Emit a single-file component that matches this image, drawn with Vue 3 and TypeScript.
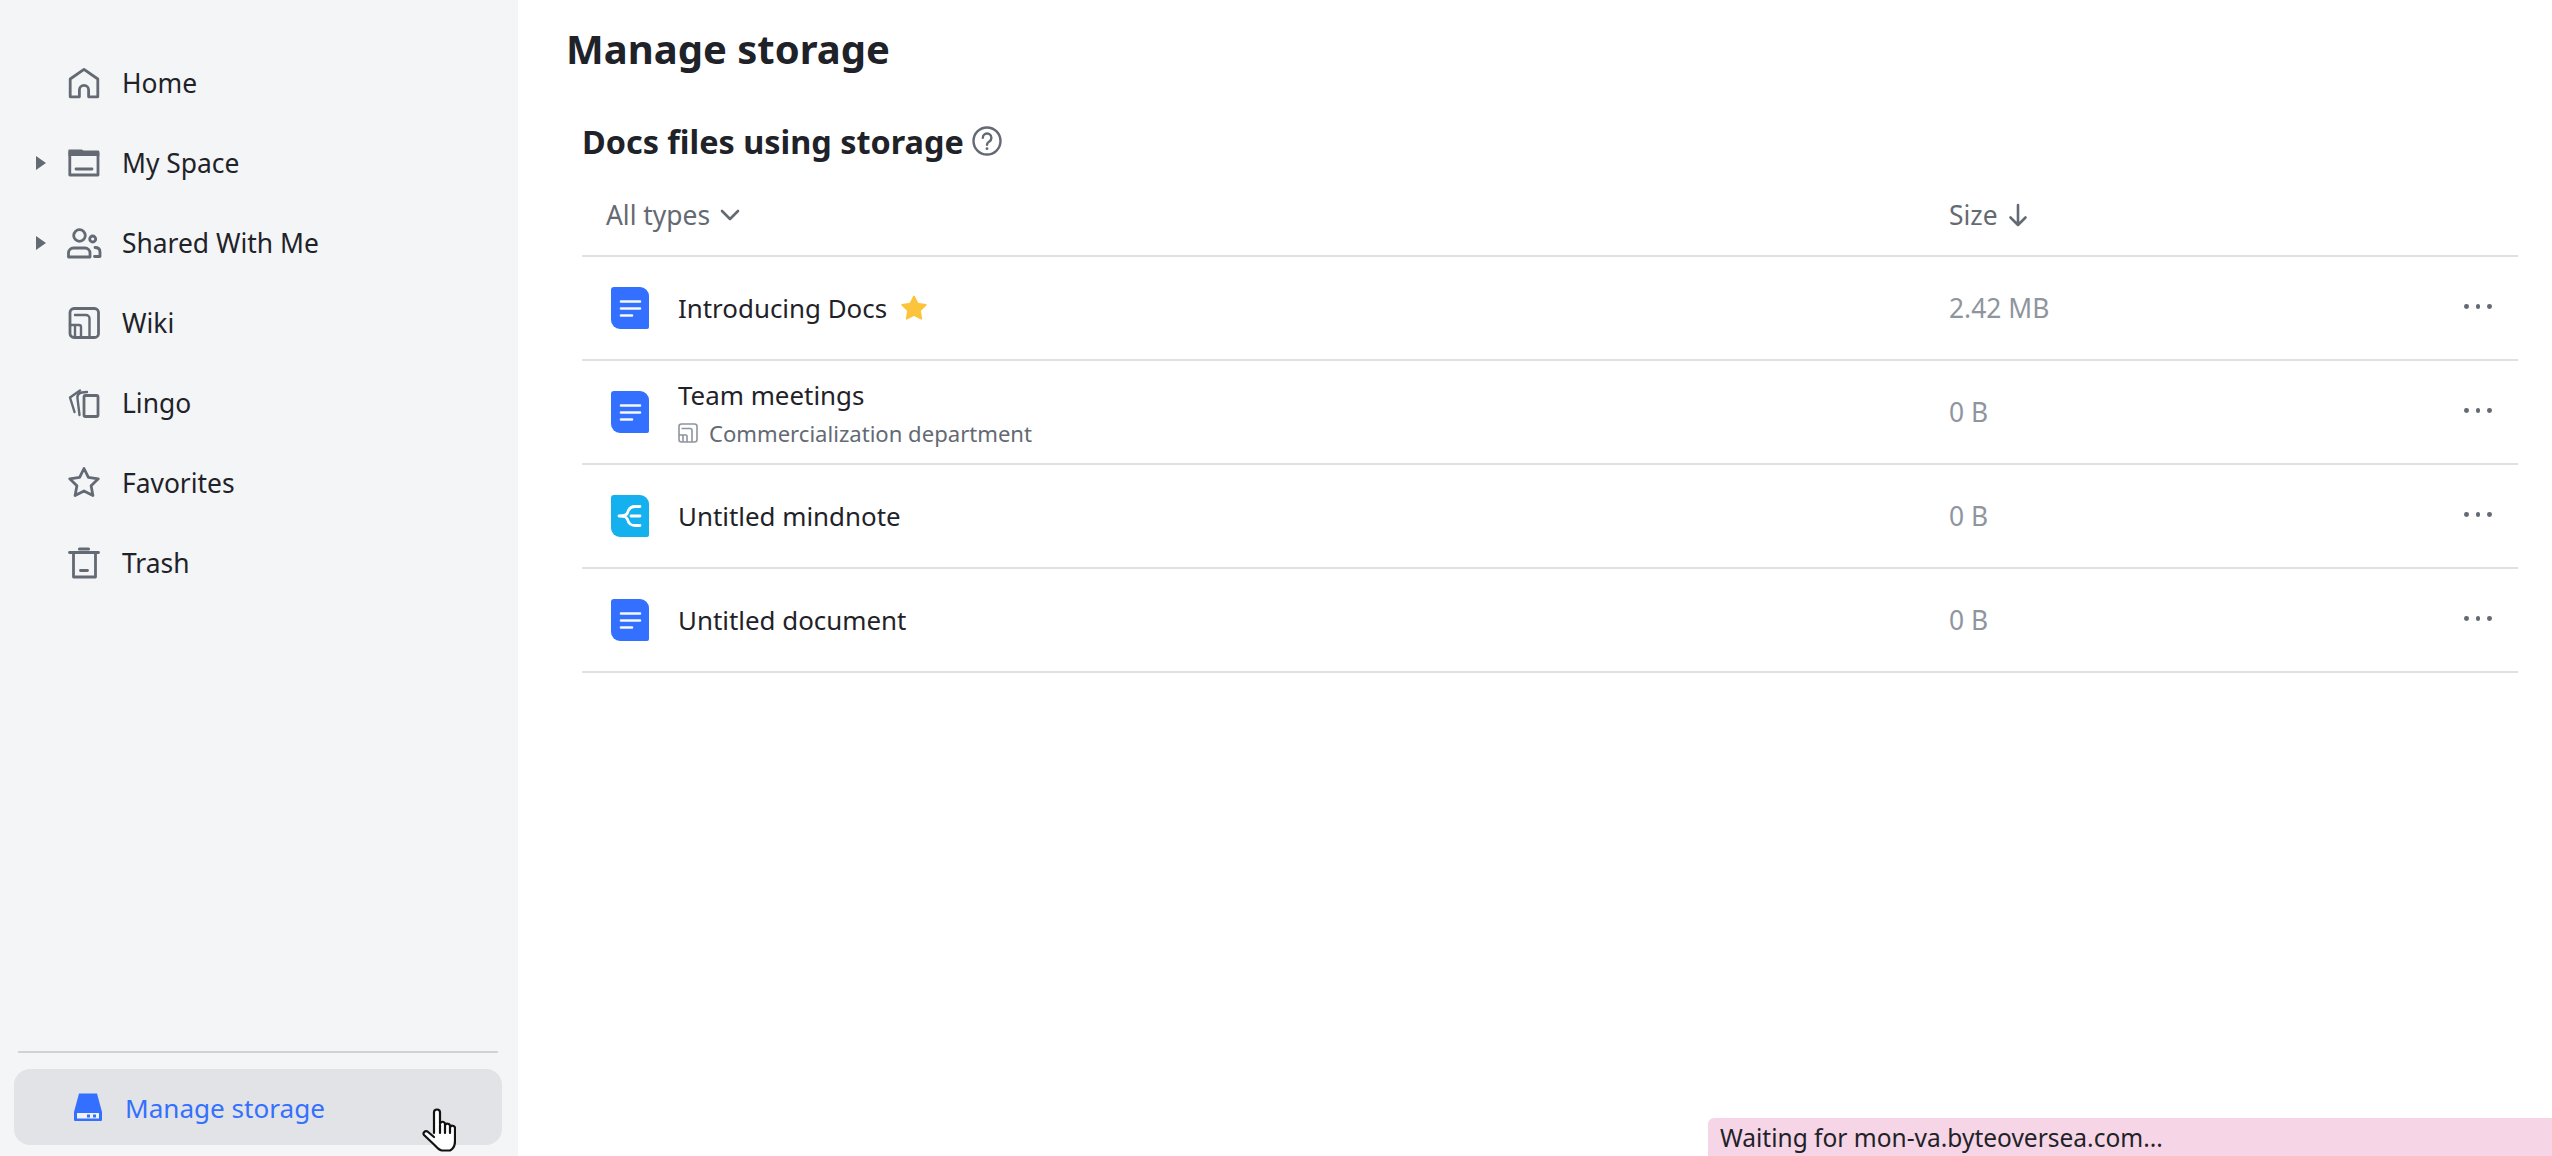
<script setup lang="ts">
const nav = [
  { key: 'home', label: 'Home', caret: false },
  { key: 'space', label: 'My Space', caret: true },
  { key: 'shared', label: 'Shared With Me', caret: true },
  { key: 'wiki', label: 'Wiki', caret: false },
  { key: 'lingo', label: 'Lingo', caret: false },
  { key: 'fav', label: 'Favorites', caret: false },
  { key: 'trash', label: 'Trash', caret: false },
]
const rows = [
  { name: 'Introducing Docs', kind: 'doc', size: '2.42 MB', star: true, sub: '' },
  { name: 'Team meetings', kind: 'doc', size: '0 B', star: false, sub: 'Commercialization department' },
  { name: 'Untitled mindnote', kind: 'mind', size: '0 B', star: false, sub: '' },
  { name: 'Untitled document', kind: 'doc', size: '0 B', star: false, sub: '' },
]
</script>

<template>
  <div class="page">
    <aside class="side">
      <nav class="nav">
        <div v-for="n in nav" :key="n.key" class="nav-row">
          <span class="caret-slot"><i v-if="n.caret" class="caret"></i></span>
          <svg class="nav-ico" viewBox="0 0 40 40" fill="none" stroke="#646a73" stroke-width="2.800" stroke-linejoin="round" stroke-linecap="round">
            <path v-if="n.key === 'home'" d="M6.200 16 20 6.400 33.800 16V33.800H24.600V27a4.600 4.600 0 0 0-9.200 0V33.800H6.200Z" />
            <template v-else-if="n.key === 'space'">
              <path d="M5.800 9H34V32H5.800Z" />
              <path d="M4.500 6.500H18L21 9.500H35.300V13H4.500Z" fill="#646a73" stroke="none" />
              <path d="M12 26H28" />
            </template>
            <template v-else-if="n.key === 'shared'">
              <circle cx="15.500" cy="12.500" r="5.800" />
              <path d="M4.500 34V30a5 5 0 0 1 5-5H21a5 5 0 0 1 5 5v4Z" />
              <circle cx="28.700" cy="16" r="3" />
              <path d="M31 24.500c3 0 5 1.500 5 4.500v4.500h-5.500" />
            </template>
            <template v-else-if="n.key === 'wiki'">
              <rect x="6" y="5.500" width="28.500" height="29" rx="4" />
              <path d="M11 12H22a3.500 3.500 0 0 1 3.500 3.500V34" stroke-width="2.400" />
              <path d="M6 22H15a2 2 0 0 1 2 2V34M11 22V34" stroke-width="2.400" />
            </template>
            <template v-else-if="n.key === 'lingo'">
              <rect x="20" y="12.500" width="14" height="21" rx="1.500" />
              <path d="M15.500 32 13.500 15.500C13 12 15 10 18 9.500l5-.5" stroke-width="2.400" />
              <path d="M10.500 29 6 14.500 16 7.500" stroke-width="2.400" />
            </template>
            <path v-else-if="n.key === 'fav'" d="M20 5.500 24.400 14.400 34.300 15.800 27.100 22.800 28.900 32.600 20 28 11.100 32.600 12.900 22.800 5.700 15.800 15.600 14.400Z" />
            <template v-else>
              <path d="M5.500 9.500H34.500" />
              <path d="M15.500 6H24.500" stroke-width="3.200" />
              <path d="M9.500 9.500V34H31.500V9.500" />
              <path d="M16.500 27.500H23.500" />
            </template>
          </svg>
          <span class="nav-label">{{ n.label }}</span>
        </div>
      </nav>
      <div class="side-foot">
        <div class="rule"></div>
        <div class="storage-btn">
          <svg class="storage-ico" viewBox="0 0 28 28">
            <path d="M5 .5H23L28 19V27a1 1 0 0 1-1 1H1a1 1 0 0 1-1-1V19Z" fill="#3370ff" />
            <rect x="3" y="20" width="22" height="5.500" fill="#f0f2f7" />
            <rect x="13" y="21.500" width="3" height="3" fill="#3370ff" />
            <rect x="19" y="21.500" width="3" height="3" fill="#3370ff" />
          </svg>
          <span class="storage-label">Manage storage</span>
        </div>
      </div>
    </aside>

    <main class="main">
      <h1 class="title">Manage storage</h1>
      <section class="panel">
        <h2 class="sub">
          Docs files using storage
          <svg class="help" viewBox="0 0 30 30" fill="none" stroke="#646a73" stroke-width="2.400" stroke-linecap="round">
            <circle cx="15" cy="15" r="13.500" />
            <path d="M10.800 11.800a4.300 4.300 0 1 1 6.500 3.700c-1.500.9-2.300 1.700-2.300 3.200" />
            <path d="M15 22.600v.1" stroke-width="2.800" />
          </svg>
        </h2>
        <div class="head row-grid">
          <div class="head-cell first">
            All types
            <svg class="chev" viewBox="0 0 20 12" fill="none" stroke="#646a73" stroke-width="2.600" stroke-linecap="round" stroke-linejoin="round"><path d="M2 2l8 8 8-8" /></svg>
          </div>
          <div class="head-cell">
            Size
            <svg class="arrow" viewBox="0 0 20 24" fill="none" stroke="#646a73" stroke-width="2.600" stroke-linecap="round" stroke-linejoin="round"><path d="M10 2v20M2.500 14.500 10 22l7.500-7.500" /></svg>
          </div>
          <div></div>
        </div>
        <div v-for="r in rows" :key="r.name" class="row row-grid">
          <div class="name-cell">
            <svg v-if="r.kind === 'doc'" class="file" viewBox="0 0 38 42">
              <path d="M3 0H29a9 9 0 0 1 9 9V40a2 2 0 0 1-2 2H9a9 9 0 0 1-9-9V3a3 3 0 0 1 3-3Z" fill="#3370ff" />
              <path d="M10 14.500H29M10 21.500H29M10 28.500H21" stroke="#fff" stroke-width="2.600" stroke-linecap="round" fill="none" opacity=".95" />
            </svg>
            <svg v-else class="file" viewBox="0 0 38 42">
              <path d="M3 0H29a9 9 0 0 1 9 9V40a2 2 0 0 1-2 2H9a9 9 0 0 1-9-9V3a3 3 0 0 1 3-3Z" fill="#14b1ee" />
              <path d="M29 11.500H24C20 11.500 17.500 14 16.500 18 15.500 20 14 21 8 21 14 21 15.500 22 16.500 24.500 17.500 28.500 20 30.500 24 30.500H29M20 21H29" stroke="#fff" stroke-width="2.800" stroke-linecap="round" stroke-linejoin="round" fill="none" />
            </svg>
            <div class="name-text">
              <div class="name-line">
                <span class="name">{{ r.name }}</span>
                <svg v-if="r.star" class="star" viewBox="0 0 26 26"><path d="M13 1.500 16.600 8.700 24.800 9.900 18.900 15.600 20.300 23.700 13 19.900 5.700 23.700 7.100 15.600 1.200 9.900 9.400 8.700Z" fill="#fcc43a" stroke="#fcc43a" stroke-width="1.800" stroke-linejoin="round" /></svg>
              </div>
              <div v-if="r.sub" class="sub-line">
                <svg class="mini" viewBox="0 0 20 20" fill="none" stroke="#8f959e" stroke-width="1.600"><rect x="1" y="1" width="18" height="18" rx="2.500" /><path d="M3.500 5.500H12a2 2 0 0 1 2 2V19M1 12H8a1 1 0 0 1 1 1v6M5 12v7" /></svg>
                <span>{{ r.sub }}</span>
              </div>
            </div>
          </div>
          <div class="size">{{ r.size }}</div>
          <div class="more"><i></i><i></i><i></i></div>
        </div>
      </section>
    </main>

    <svg class="hand" viewBox="0 0 34 44" fill="#fff" stroke="#111" stroke-width="2.200" stroke-linejoin="round" stroke-linecap="round">
      <path d="M12 25V4.500a3 3 0 0 1 6 0V16a2.500 2.500 0 0 1 5 .5V18a2.500 2.500 0 0 1 5 .5V20a2.500 2.500 0 0 1 5 .5V33c0 5-2 8-5 9.500H20c-3 0-5-3-8-6L2 27c-1.500-2 1-5 3.500-3.500L12 29" />
      <path d="M18 17V25M23 18V25M28 20V25" />
    </svg>
    <div class="status">Waiting for mon-va.byteoversea.com...</div>
  </div>
</template>

<style scoped>
.page {
  position: relative;
  display: flex;
  width: 2552px;
  height: 1156px;
  overflow: hidden;
  background: #fff;
  color: #1f2329;
  font-family: "Noto Sans", "Open Sans", "Liberation Sans", sans-serif;
  font-size: 26.400px;
}
.side {
  width: 518px;
  flex: none;
  display: flex;
  flex-direction: column;
  justify-content: space-between;
  background: #f4f5f7;
  padding: 43px 0 11px;
  box-sizing: border-box;
}
.nav { display: flex; flex-direction: column; }
.nav-row { display: flex; align-items: center; height: 80px; }
.caret-slot { width: 64px; padding-left: 36px; box-sizing: border-box; display: flex; flex: none; }
.caret {
  width: 0; height: 0;
  border-left: 10px solid #646a73;
  border-top: 7.500px solid transparent;
  border-bottom: 7.500px solid transparent;
}
.nav-ico { width: 40px; height: 40px; flex: none; }
.nav-label { margin-left: 18px; line-height: 36px; }
.side-foot { padding: 0 16px 0 14px; }
.rule { height: 2px; margin: 0 4px 16px; background: #d0d3d6; }
.storage-btn {
  display: flex;
  align-items: center;
  height: 76px;
  border-radius: 16px;
  background: #e2e3e6;
  padding-left: 60px;
  color: #3370ff;
  gap: 23px;
}
.storage-label { font-size: 26.100px; padding-top: 2px; }
.storage-ico { width: 28px; height: 28px; flex: none; }
.main { flex: 1; padding: 0 34px 0 48px; box-sizing: border-box; min-width: 0; }
.title { margin: 27px 0 0; font-size: 40px; line-height: 44px; font-weight: 700; color: #1f2329; }
.panel { margin: 48px 0 0 16px; }
.sub { display: flex; align-items: center; gap: 8px; margin: 0 0 1px; height: 44px; font-size: 32.400px; font-weight: 700; }
.help { width: 30px; height: 30px; }
.row-grid { display: grid; grid-template-columns: 1367px 1fr 80px; align-items: center; border-bottom: 2px solid #dee0e3; box-sizing: border-box; }
.head { height: 93px; padding-top: 10px; color: #646a73; }
.head-cell { display: flex; align-items: center; gap: 10px; }
.head-cell.first { padding-left: 24px; }
.chev { width: 20px; height: 12px; }
.arrow { width: 20px; height: 24px; }
.row { height: 104px; }
.name-cell { display: flex; align-items: center; padding-left: 29px; }
.file { width: 38px; height: 42px; flex: none; }
.name-text { margin-left: 29px; }
.name-line { display: flex; align-items: center; gap: 14px; line-height: 38px; font-size: 25.900px; }
.star { width: 26px; height: 26px; }
.sub-line { display: flex; align-items: center; gap: 11px; font-size: 22.100px; line-height: 32px; color: #646a73; margin-top: 3px; }
.mini { width: 20px; height: 20px; }
.size { color: #8f959e; }
.more { display: flex; gap: 6.800px; justify-content: flex-end; padding-right: 26px; margin-top: -3px; }
.more i { width: 4.800px; height: 4.800px; border-radius: 50%; background: #646a73; }
.hand { position: absolute; left: 422px; top: 1108px; width: 34px; height: 44px; }
.status {
  position: absolute;
  left: 1708px;
  top: 1118px;
  right: 0;
  height: 38px;
  padding-left: 12px;
  border-top-left-radius: 6px;
  background: #f5d5e6;
  color: #1f2329;
  font-size: 24.500px;
  line-height: 40px;
}
</style>
